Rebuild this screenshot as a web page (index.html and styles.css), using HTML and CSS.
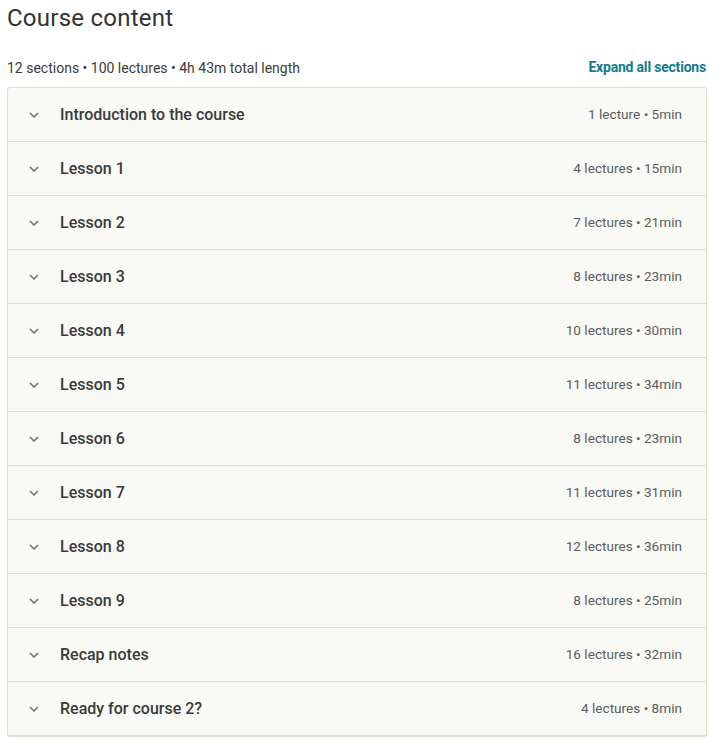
FILE: index.html
```html
<!DOCTYPE html>
<html>
<head>
<meta charset="utf-8">
<link rel="stylesheet" href="styles.css">
</head>
<body>
<div class="page">
  <h2 class="title">Course content</h2>
  <div class="summary">
    <span class="stats">12 sections • 100 lectures • 4h 43m total length</span>
    <span class="expand">Expand all sections</span>
  </div>
  <div class="sections">
    <div class="row"><span class="chev"><svg width="10" height="6" viewBox="0 0 10 6"><path d="M1 1l4 4 4-4" fill="none" stroke="#686f7a" stroke-width="1.5"/></svg></span><span class="name">Introduction to the course</span><span class="meta">1 lecture • 5min</span></div>
    <div class="row"><span class="chev"><svg width="10" height="6" viewBox="0 0 10 6"><path d="M1 1l4 4 4-4" fill="none" stroke="#686f7a" stroke-width="1.5"/></svg></span><span class="name">Lesson 1</span><span class="meta">4 lectures • 15min</span></div>
    <div class="row"><span class="chev"><svg width="10" height="6" viewBox="0 0 10 6"><path d="M1 1l4 4 4-4" fill="none" stroke="#686f7a" stroke-width="1.5"/></svg></span><span class="name">Lesson 2</span><span class="meta">7 lectures • 21min</span></div>
    <div class="row"><span class="chev"><svg width="10" height="6" viewBox="0 0 10 6"><path d="M1 1l4 4 4-4" fill="none" stroke="#686f7a" stroke-width="1.5"/></svg></span><span class="name">Lesson 3</span><span class="meta">8 lectures • 23min</span></div>
    <div class="row"><span class="chev"><svg width="10" height="6" viewBox="0 0 10 6"><path d="M1 1l4 4 4-4" fill="none" stroke="#686f7a" stroke-width="1.5"/></svg></span><span class="name">Lesson 4</span><span class="meta">10 lectures • 30min</span></div>
    <div class="row"><span class="chev"><svg width="10" height="6" viewBox="0 0 10 6"><path d="M1 1l4 4 4-4" fill="none" stroke="#686f7a" stroke-width="1.5"/></svg></span><span class="name">Lesson 5</span><span class="meta">11 lectures • 34min</span></div>
    <div class="row"><span class="chev"><svg width="10" height="6" viewBox="0 0 10 6"><path d="M1 1l4 4 4-4" fill="none" stroke="#686f7a" stroke-width="1.5"/></svg></span><span class="name">Lesson 6</span><span class="meta">8 lectures • 23min</span></div>
    <div class="row"><span class="chev"><svg width="10" height="6" viewBox="0 0 10 6"><path d="M1 1l4 4 4-4" fill="none" stroke="#686f7a" stroke-width="1.5"/></svg></span><span class="name">Lesson 7</span><span class="meta">11 lectures • 31min</span></div>
    <div class="row"><span class="chev"><svg width="10" height="6" viewBox="0 0 10 6"><path d="M1 1l4 4 4-4" fill="none" stroke="#686f7a" stroke-width="1.5"/></svg></span><span class="name">Lesson 8</span><span class="meta">12 lectures • 36min</span></div>
    <div class="row"><span class="chev"><svg width="10" height="6" viewBox="0 0 10 6"><path d="M1 1l4 4 4-4" fill="none" stroke="#686f7a" stroke-width="1.5"/></svg></span><span class="name">Lesson 9</span><span class="meta">8 lectures • 25min</span></div>
    <div class="row"><span class="chev"><svg width="10" height="6" viewBox="0 0 10 6"><path d="M1 1l4 4 4-4" fill="none" stroke="#686f7a" stroke-width="1.5"/></svg></span><span class="name">Recap notes</span><span class="meta">16 lectures • 32min</span></div>
    <div class="row"><span class="chev"><svg width="10" height="6" viewBox="0 0 10 6"><path d="M1 1l4 4 4-4" fill="none" stroke="#686f7a" stroke-width="1.5"/></svg></span><span class="name">Ready for course 2?</span><span class="meta">4 lectures • 8min</span></div>
  </div>
</div>
</body>
</html>
```

FILE: styles.css
```css
* { box-sizing: border-box; }
body {
  margin: 0;
  background: #fff;
  font-family: Roboto, "Liberation Sans", sans-serif;
  color: #333;
}
.page {
  width: 715px;
  padding: 0 9px 0 7px;
}
.title {
  margin: 0;
  padding-top: 4px;
  font-size: 24px;
  line-height: 28px;
  font-weight: 400;
  letter-spacing: 0.25px;
  color: #333;
}
.summary {
  display: flex;
  justify-content: space-between;
  align-items: center;
  margin-top: 25px;
  height: 22px;
  font-size: 14px;
}
.stats { color: #3c3b37; }
.expand {
  color: #0f7c90;
  font-weight: 700;
  font-size: 14px;
  letter-spacing: -0.2px;
  margin-top: -2px;
}
.sections {
  margin-top: 8px;
  border: 1px solid #dedfd0;
  border-bottom-width: 2px;
  border-radius: 3px;
  background: #f9f9f5;
  width: 700px;
}
.row {
  display: flex;
  align-items: center;
  height: 54px;
  border-top: 1px solid #dedfd0;
  padding: 0 24px 0 21px;
}
.row:first-child { border-top: none; height: 53px; }
.chev {
  width: 31px;
  display: flex;
  align-items: center;
}
.chev svg { display: block; }
.name {
  flex: 1;
  font-size: 16px;
  font-weight: 500;
  color: #3a3a3a;
}
.meta {
  font-size: 13.6px;
  color: #5c5c5c;
  margin-top: -2px;
}
```
